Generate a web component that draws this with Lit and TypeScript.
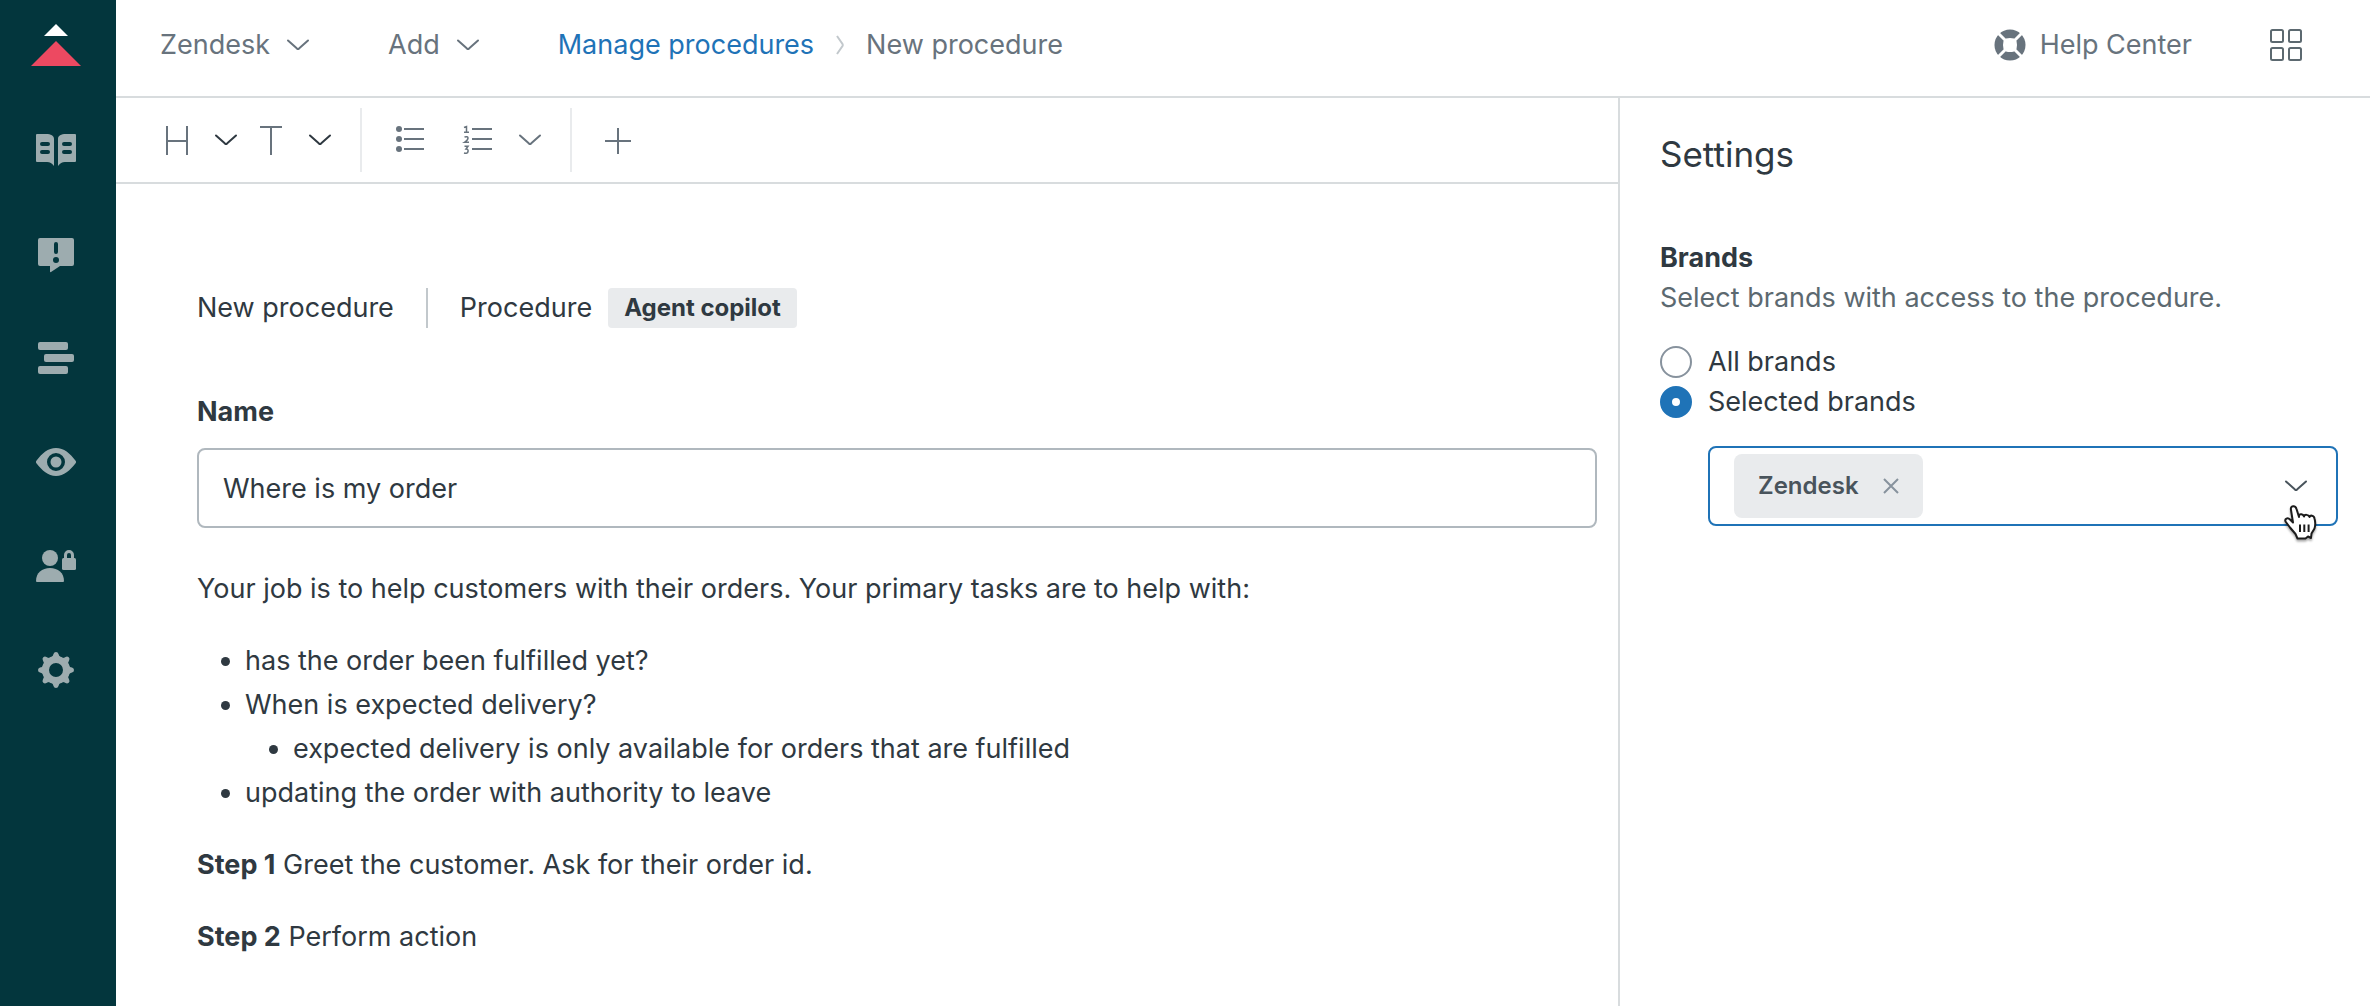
import { LitElement, html, css, svg } from "lit";
import { customElement, state } from "lit/decorators.js";

const chevron = (cls = "") => html`<svg class="chev ${cls}" viewBox="0 0 24 12" aria-hidden="true">
  <path d="M2 1.5 L11 9.6 Q12 10.4 13 9.6 L22 1.5" fill="none" stroke="currentColor" stroke-width="2" stroke-linecap="round" /></svg>`;

const NAV = [
  {
    label: "Knowledge base",
    art: svg`<path fill-rule="evenodd" d="M1 4h9c5 0 8 1.500 8 5v27c-2-2.500-4-4-7-4H1a1 1 0 0 1-1-1V5a1 1 0 0 1 1-1zM6 12a2 2 0 0 0 0 4h6a2 2 0 0 0 0-4zM6 20a2 2 0 0 0 0 4h6a2 2 0 0 0 0-4z"/>
    <path fill-rule="evenodd" d="M39 4h-9c-5 0-8 1.500-8 5v27c2-2.500 4-4 7-4h10a1 1 0 0 0 1-1V5a1 1 0 0 0-1-1zM28 12a2 2 0 0 0 0 4h6a2 2 0 0 0 0-4zM28 20a2 2 0 0 0 0 4h6a2 2 0 0 0 0-4z"/>`,
  },
  {
    label: "Content requests",
    art: svg`<path fill-rule="evenodd" d="M4 4h32a2 2 0 0 1 2 2v24a2 2 0 0 1-2 2H24l-9 6a.7.7 0 0 1-1-.6V32H4a2 2 0 0 1-2-2V6a2 2 0 0 1 2-2zM20 8a2 2 0 0 0-2 2v8a2 2 0 0 0 4 0v-8a2 2 0 0 0-2-2zM20 23a3 3 0 1 0 0 6 3 3 0 0 0 0-6z"/>`,
  },
  {
    label: "Arrange content",
    art: svg`<rect x="2" y="4" width="30" height="8" rx="2"/><rect x="8" y="16" width="30" height="8" rx="2"/><rect x="2" y="28" width="30" height="8" rx="2"/>`,
  },
  {
    label: "Preview",
    art: svg`<path fill-rule="evenodd" d="M.6 21.600a2.500 2.500 0 0 1 0-3.200C6 11.500 12 6 20 6s14 5.500 19.400 12.400a2.500 2.500 0 0 1 0 3.200C34 28.500 28 34 20 34S6 28.500.6 21.600zM20 11a9 9 0 1 0 0 18 9 9 0 0 0 0-18z"/><circle cx="20" cy="20" r="5.500"/>`,
  },
  {
    label: "User permissions",
    art: svg`<circle cx="14" cy="12" r="8"/><path d="M0 35C0 27 6 22 14 22s14 5 14 13a1 1 0 0 1-1 1H1a1 1 0 0 1-1-1z"/>
    <rect x="26" y="12" width="14" height="12" rx="1.500"/><path d="M29.500 13V9a3.500 3.500 0 0 1 7 0v4" fill="none" stroke="currentColor" stroke-width="3"/>`,
  },
  {
    label: "Settings",
    art: svg`<circle cx="20" cy="20" r="10.500" fill="none" stroke="currentColor" stroke-width="7"/>
    ${[0, 45, 90, 135, 180, 225, 270, 315].map(
      (a) => svg`<path transform="rotate(${a} 20 20)" d="M14.500 7.800Q17 7 17.500 4Q18 2 20 2T22.500 4Q23 7 25.500 7.800V9H14.500z"/>`
    )}`,
  },
];

@customElement("app-root")
export class AppRoot extends LitElement {
  static styles = css`
    :host {
      display: grid;
      grid-template-columns: 116px minmax(0, 1fr);
      min-height: 100vh;
      font: 27px/40px Inter, "Liberation Sans", sans-serif;
      color: #2f3941;
      background: #fff;
    }
    *, *::before, *::after { box-sizing: border-box; }
    button, input { font: inherit; color: inherit; }
    button { background: none; border: 0; padding: 0; display: flex; align-items: center; cursor: pointer; }
    a { text-decoration: none; color: inherit; }
    svg { display: block; flex: none; }
    h1, h2, p, ul, fieldset { margin: 0; padding: 0; border: 0; }

    .rail { background: #03363d; display: flex; flex-direction: column; align-items: center; padding-right: 4px; }
    .logo { height: 98px; padding-top: 24px; }
    .logo svg { width: 50px; height: 42px; }
    .rail-link { height: 104px; display: flex; align-items: center; color: #9dacaf; }
    .rail-link svg { width: 40px; height: 40px; fill: currentColor; }

    .main { display: flex; flex-direction: column; min-width: 0; }
    .top { height: 98px; border-bottom: 2px solid #d8dcde; padding: 0 68px 6px 44px; display: flex; align-items: center; color: #68737d; }
    .menu { gap: 16px; margin-right: 78px; }
    .chev { width: 24px; height: 12px; }
    .crumbs { display: flex; align-items: center; gap: 22px; }
    .crumbs a { color: #1f73b7; }
    .crumbs svg { width: 8px; height: 20px; color: #c2c8cc; }
    .help { margin-left: auto; display: flex; align-items: center; gap: 14px; }
    .help svg { width: 32px; height: 32px; }
    .apps { margin-left: 78px; }
    .apps svg { width: 32px; height: 32px; }

    .body { flex: 1; display: grid; grid-template-columns: minmax(0, 1fr) 752px; }
    .editor { min-width: 0; }
    .tools { height: 86px; border-bottom: 2px solid #d8dcde; display: flex; align-items: center; color: #68737d; padding-left: 48px; }
    .tools svg.tool { width: 32px; height: 32px; }
    .tools button { gap: 18px; }
    .dark { color: #2f3941; }
    .tools .heading { margin-right: 22px; }
    .sep { width: 2px; height: 64px; background: #e9ebed; }
    .tools .text-tool { gap: 16px; margin-right: 28px; }
    .tools .bullets { margin: 0 36px 0 32px; }
    .tools .numbers { gap: 24px; margin-right: 28px; }
    .tools .plus { margin-left: 32px; }

    .doc { padding: 104px 21px 32px 81px; }
    .kind { display: flex; align-items: center; height: 40px; }
    .kind-type { border-left: 2px solid #c2c8cc; margin-left: 32px; padding-left: 32px; }
    .tag { margin-left: 16px; padding: 0 16px; background: #e9ebed; border-radius: 4px; font-size: 24px; font-weight: 700; }
    .label { display: block; margin-top: 64px; font-weight: 700; }
    .name { display: block; width: 100%; height: 80px; margin-top: 16px; padding: 0 24px; border: 2px solid #b0b8be; border-radius: 8px; background: #fff; outline: 0; }
    .prose { margin-top: 39px; line-height: 44px; }
    .prose > * + * { margin-top: 28px; }
    .prose ul { padding-left: 48px; list-style: disc; }
    .prose b { font-weight: 700; }

    .side { border-left: 2px solid #d8dcde; padding: 32px 32px 32px 40px; }
    .side h1 { font-size: 35px; line-height: 48px; font-weight: 400; }
    .brands { margin-top: 60px; }
    .brands legend { padding: 0; font-weight: 700; }
    .hint { color: #5c6970; }
    .radios { margin-top: 24px; }
    .radio { display: flex; align-items: center; gap: 16px; }
    .radio input { appearance: none; margin: 0; width: 32px; height: 32px; border: 2px solid #87929d; border-radius: 50%; background: #fff; }
    .radio input:checked { border: 12px solid #1f73b7; }
    .picker { position: relative; display: flex; align-items: center; height: 80px; margin: 24px 0 0 48px; padding: 0 28px 0 24px; border: 2px solid #1f73b7; border-radius: 8px; }
    .chip { display: flex; align-items: center; gap: 24px; height: 64px; padding: 0 24px; border-radius: 8px; background: #e9ebed; color: #49545c; font-size: 24px; font-weight: 600; }
    .chip svg { width: 16px; height: 16px; color: #87929d; }
    .open { flex: 1; height: 100%; justify-content: flex-end; color: #49545c; }
    .cursor { position: absolute; right: 17px; bottom: -18px; width: 36px; height: 38px; overflow: visible; pointer-events: none; filter: drop-shadow(0 2px 1px rgba(0, 0, 0, 0.35)); }
  `;

  @state() private scope = "selected";
  @state() private brands = ["Zendesk"];

  private radio(value: string, label: string) {
    return html`<label class="radio"><input type="radio" name="scope" .checked=${this.scope === value}
      @change=${() => (this.scope = value)} />${label}</label>`;
  }

  render() {
    return html`
      <nav class="rail" aria-label="Main">
        <a class="logo" href="#" aria-label="Home"><svg viewBox="0 0 50 42"><path d="M25 0 37 12H13z" fill="#fff"/><path d="M25 17 50 42H0z" fill="#ed4961"/></svg></a>
        ${NAV.map((n) => html`<a class="rail-link" href="#" aria-label=${n.label}><svg viewBox="0 0 40 40">${n.art}</svg></a>`)}
      </nav>
      <div class="main">
        <header class="top">
          <button class="menu">Zendesk ${chevron()}</button>
          <button class="menu">Add ${chevron()}</button>
          <nav class="crumbs" aria-label="Breadcrumb">
            <a href="#">Manage procedures</a>
            <svg viewBox="0 0 8 20"><path d="M1 1 6.500 9Q7 10 6.500 11L1 19" fill="none" stroke="currentColor" stroke-width="2"/></svg>
            <span>New procedure</span>
          </nav>
          <a class="help" href="#">
            <svg viewBox="0 0 32 32"><circle cx="16" cy="16" r="15.500" fill="currentColor"/><path d="M12 9.500Q16 8.500 20 9.500L22.500 12Q23.500 16 22.500 20L20 22.500Q16 23.500 12 22.500L9.500 20Q8.500 16 9.500 12z" fill="#fff"/><path d="M4 4 12 12M28 4 20 12M4 28 12 20M28 28 20 20" stroke="#fff" stroke-width="3"/></svg>
            Help Center</a>
          <button class="apps" aria-label="Products">
            <svg viewBox="0 0 32 32" fill="none" stroke="#5c6970" stroke-width="2"><rect x="1" y="1" width="12" height="12" rx="1.500"/><rect x="19" y="1" width="12" height="12" rx="1.500"/><rect x="1" y="19" width="12" height="12" rx="1.500"/><rect x="19" y="19" width="12" height="12" rx="1.500"/></svg>
          </button>
        </header>
        <div class="body">
          <main class="editor">
            <div class="tools" role="toolbar" aria-label="Formatting">
              <button class="heading" aria-label="Heading"><svg class="tool" viewBox="0 0 32 32" fill="none" stroke="currentColor" stroke-width="2"><path d="M3 2V31M23 2V31M3 17H23"/></svg>${chevron("dark")}</button>
              <button class="text-tool" aria-label="Text style"><svg class="tool" viewBox="0 0 32 32" fill="none" stroke="currentColor" stroke-width="2"><path d="M0 3H22M11 3V31"/></svg>${chevron("dark")}</button>
              <span class="sep"></span>
              <button class="bullets" aria-label="Bulleted list"><svg class="tool" viewBox="0 0 32 32" fill="currentColor"><circle cx="5" cy="5" r="3"/><circle cx="5" cy="15" r="3"/><circle cx="5" cy="25" r="3"/><path d="M10 4H30V6H10zM10 14H30V16H10zM10 24H30V26H10z"/></svg></button>
              <button class="numbers" aria-label="Numbered list"><svg class="tool" viewBox="0 0 32 32" fill="none" stroke="currentColor" stroke-width="2"><path d="M10 5H30M10 15H30M10 25H30"/><path stroke-width="1.500" d="M2 3.500 4.500 2.500V8M2 8.200H7M2.500 13Q6 12 6 14T2.500 18.300H7M2.500 22.300H6L4 25Q6.500 25 6 27.500T2 29"/></svg>${chevron()}</button>
              <span class="sep"></span>
              <button class="plus" aria-label="Insert"><svg class="tool" viewBox="0 0 32 32" stroke="currentColor" stroke-width="2"><path d="M14 4V30M1 17H27"/></svg></button>
            </div>
            <div class="doc">
              <div class="kind"><span>New procedure</span><span class="kind-type">Procedure</span><span class="tag">Agent copilot</span></div>
              <label class="label" for="name">Name</label>
              <input class="name" id="name" type="text" value="Where is my order" />
              <div class="prose">
                <p>Your job is to help customers with their orders. Your primary tasks are to help with:</p>
                <ul>
                  <li>has the order been fulfilled yet?</li>
                  <li>When is expected delivery?<ul><li>expected delivery is only available for orders that are fulfilled</li></ul></li>
                  <li>updating the order with authority to leave</li>
                </ul>
                <p><b>Step 1</b> Greet the customer. Ask for their order id.</p>
                <p><b>Step 2</b> Perform action</p>
              </div>
            </div>
          </main>
          <aside class="side">
            <h1>Settings</h1>
            <fieldset class="brands">
              <legend>Brands</legend>
              <p class="hint">Select brands with access to the procedure.</p>
              <div class="radios">${this.radio("all", "All brands")}${this.radio("selected", "Selected brands")}</div>
              <div class="picker">
                ${this.brands.map((b) => html`<span class="chip">${b}<button aria-label="Remove ${b}" @click=${() => (this.brands = this.brands.filter((x) => x !== b))}>
                  <svg viewBox="0 0 16 16"><path d="M1 1 15 15M15 1 1 15" stroke="currentColor" stroke-width="2"/></svg></button></span>`)}
                <button class="open" aria-label="Choose brands" aria-haspopup="listbox">${chevron()}</button>
                <svg class="cursor" viewBox="0 0 36 38"><path d="M8 6C7.500 3.500 8.500 2.500 10 2.300S13 3 13.500 5L16 13V11.500C16.500 9.800 20 9.800 21 12.500C21.500 10 25.500 10.500 26.500 13C27 11 31 11 31.500 14.500Q33 20 31.500 24.500L28.500 29.500 28 34 25 32.500 22.500 34.500H14.500L12.500 30 7 23.500 2.500 17.500C1.500 15 4.500 13 7 15.500L10 18.500z" fill="#fff" stroke="#1c1c1c" stroke-width="2" stroke-linejoin="round"/><path d="M17 20.500V28M21.300 20.500V28M25.600 20.500V28" stroke="#1c1c1c" stroke-width="2"/></svg>
              </div>
            </fieldset>
          </aside>
        </div>
      </div>
    `;
  }
}
